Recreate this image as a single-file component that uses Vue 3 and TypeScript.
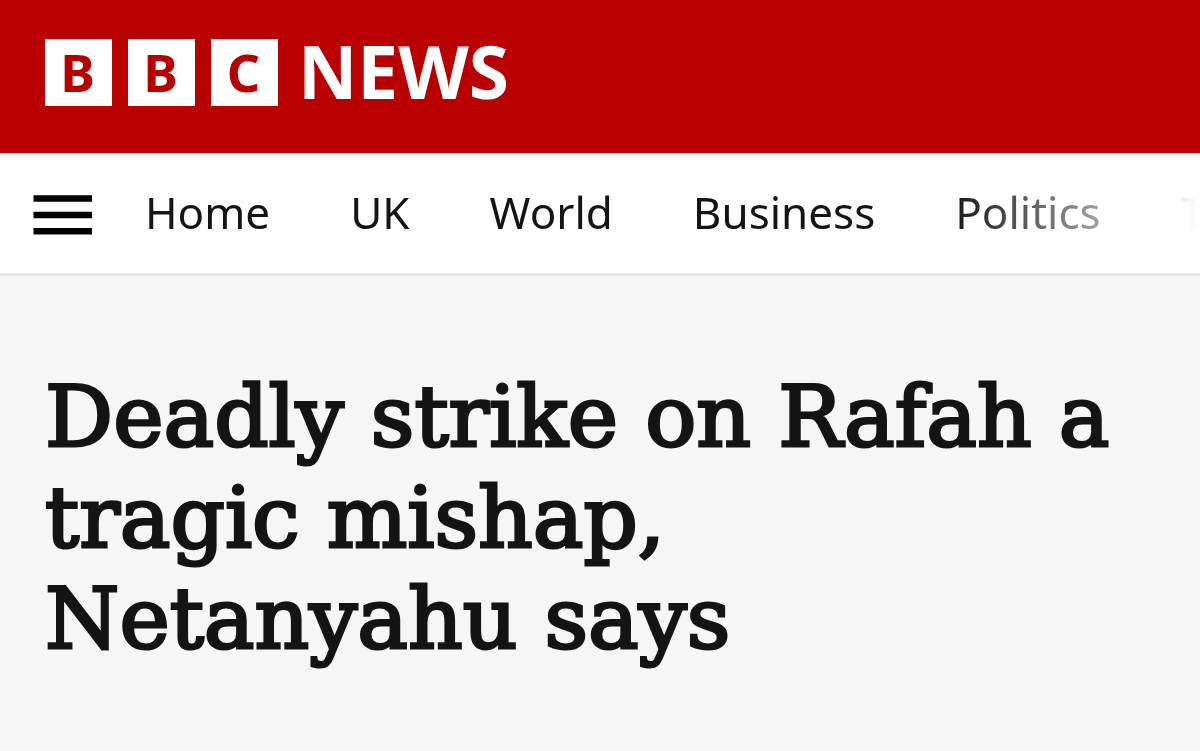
<script setup lang="ts">
const letters: string[] = ['B', 'B', 'C']
const links: string[] = ['Home', 'UK', 'World', 'Business', 'Politics', 'Technology']
</script>

<template>
  <div class="page">
    <header class="masthead">
      <a class="brand" href="#" aria-label="BBC News">
        <span v-for="(letter, i) in letters" :key="i" class="block">{{ letter }}</span>
        <span class="news">NEWS</span>
      </a>
    </header>
    <nav class="nav" aria-label="Sections">
      <button class="menu" type="button" aria-label="Menu">
        <svg viewBox="0 0 60 40" width="60" height="40" aria-hidden="true">
          <path d="M1.5 3.5H60M1.5 20H60M1.5 36.3H60" stroke="#000" stroke-width="6.6" />
        </svg>
      </button>
      <ul class="links">
        <li v-for="link in links" :key="link"><a href="#">{{ link }}</a></li>
      </ul>
    </nav>
    <main class="story">
      <h1>Deadly strike on Rafah a tragic mishap, Netanyahu says</h1>
    </main>
  </div>
</template>

<style scoped>
.page {
  min-height: 100vh;
  display: flex;
  flex-direction: column;
  background: #f6f6f6;
  font-family: "Noto Sans", "Open Sans", sans-serif;
}
.masthead {
  padding: 39px 45px 47px;
  background: #b80000;
}
.brand {
  display: flex;
  width: fit-content;
  gap: 16px;
  color: #fff;
  text-decoration: none;
}
.block {
  display: flex;
  align-items: center;
  justify-content: center;
  width: 67px;
  height: 67px;
  background: #fff;
  color: #b80000;
  font-size: 52px;
  font-weight: 700;
  line-height: 64px;
}
.block {
  box-sizing: border-box;
  padding: 0 2px 2px 0;
}
.news {
  margin-left: 4px;
  font-size: 73px;
  font-weight: 700;
  line-height: 64px;
}
.nav {
  display: flex;
  align-items: center;
  height: 120px;
  border-bottom: 3px solid #e6e8ea;
  background: #fff;
  overflow: hidden;
}
.menu {
  display: flex;
  flex: none;
  margin: 4px 0 0 32px;
  padding: 0;
  border: 0;
  background: none;
}
.links {
  display: flex;
  flex: 1;
  min-width: 0;
  gap: 80px;
  margin: 0;
  padding: 0 0 2px 53px;
  overflow: hidden;
  list-style: none;
  mask-image: linear-gradient(to left, transparent 0, #000 250px);
}
.links a {
  color: #141414;
  font-size: 44px;
  line-height: 60px;
  text-decoration: none;
}
.story {
  padding: 90px 45px;
}
h1 {
  max-width: 1110px;
  margin: 0;
  color: #141414;
  font-family: "DejaVu Serif", serif;
  font-size: 85px;
  font-weight: 400;
  line-height: 101px;
  -webkit-text-stroke: 3px #141414;
}
</style>

<style>
body {
  margin: 0;
}
</style>
